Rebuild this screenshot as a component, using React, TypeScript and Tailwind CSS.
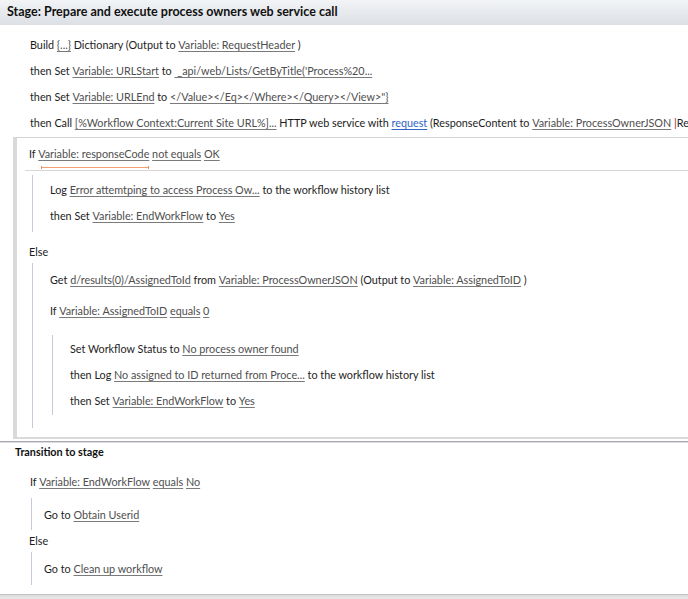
import React from 'react'

type Kids = { children: React.ReactNode; className?: string }

const L = ({ children, blue }: { children: React.ReactNode; blue?: boolean }) => (
  <span
    className={
      blue
        ? 'text-[#2f63c4] underline underline-offset-[2px] decoration-[#2f63c4]'
        : 'text-[#4e4e4e] underline underline-offset-[2px] decoration-[#7a7a7a]'
    }
  >
    {children}
  </span>
)

const Row = ({ children, className = '' }: Kids) => (
  <div className={`h-[26px] flex items-center whitespace-nowrap ${className}`}>{children}</div>
)

// vertical rule of a nested block
const Block = ({ children, className = '' }: Kids) => (
  <div className={`border-l border-[#c8c8da] ${className}`}>{children}</div>
)

const App = () => {
  return (
    <div className="w-[688px] h-[599px] overflow-hidden bg-white text-[10.8px] text-[#1c1c1c] font-['Lato',sans-serif]">
      {/* stage header */}
      <div className="h-[25px] flex items-center pl-[7px] bg-gradient-to-b from-[#f2f4f6] to-[#dce0e5] font-bold text-[12.5px] text-[#111] whitespace-nowrap">
        Stage: Prepare and execute process owners web service call
      </div>

      <div className="pt-[7px] pl-[30px]">
        <Row>
          Build&nbsp;<L>{'{...}'}</L>&nbsp;Dictionary (Output to&nbsp;<L>Variable: RequestHeader</L>&nbsp;)
        </Row>
        <Row>
          then Set&nbsp;<L>Variable: URLStart</L>&nbsp;to&nbsp;<L>&nbsp;_api/web/Lists/GetByTitle('Process%20...</L>
        </Row>
        <Row>
          then Set&nbsp;<L>Variable: URLEnd</L>&nbsp;to&nbsp;<L>{'</Value></Eq></Where></Query></View>"}'}</L>
        </Row>
        <Row className="overflow-hidden">
          then Call&nbsp;<L>[%Workflow Context:Current Site URL%]...</L>&nbsp;HTTP web service with&nbsp;
          <L blue>request</L>&nbsp;(ResponseContent to&nbsp;<L>Variable: ProcessOwnerJSON</L>&nbsp;
          <span className="text-[#8a1c1c]">|</span>Res
        </Row>
      </div>

      {/* If / Else box */}
      <div className="mt-[1px] ml-[13px] border-l-4 border-l-[#d9d9d9] border-t border-t-[#d4d4d4] border-b-2 border-b-[#dadada] pb-[9px]">
        <div className="pt-[3px] pl-[12px]">
          <Row>
            If&nbsp;
            <span className="relative">
              <L>Variable: responseCode</L>
              <span className="absolute left-[3px] right-0 bottom-[-7px] h-[3px] border-x border-[#f08a52] flex items-center">
                <span className="w-full h-px bg-[#f4a074]" />
              </span>
            </span>
            &nbsp;<L>not equals</L>&nbsp;<L>OK</L>
          </Row>
        </div>
        <div className="mt-[3px] ml-[8px] border-t border-[#d8d8d8]" />

        <Block className="mt-[4px] ml-[15px] pl-[17px] pt-[2px] pb-[3px]">
          <Row>
            Log&nbsp;<L>Error attemtping to access Process Ow...</L>&nbsp;to the workflow history list
          </Row>
          <Row>
            then Set&nbsp;<L>Variable: EndWorkFlow</L>&nbsp;to&nbsp;<L>Yes</L>
          </Row>
        </Block>

        <Row className="mt-[9px] !h-[22px] pl-[12px]">Else</Row>

        <Block className="ml-[15px] pt-[4px] pb-[13px]">
          <Row className="pl-[17px]">
            Get&nbsp;<L>d/results(0)/AssignedToId</L>&nbsp;from&nbsp;<L>Variable: ProcessOwnerJSON</L>&nbsp;(Output to&nbsp;
            <L>Variable: AssignedToID</L>&nbsp;)
          </Row>
          <Row className="mt-[5px] pl-[17px]">
            If&nbsp;<L>Variable: AssignedToID</L>&nbsp;<L>equals</L>&nbsp;<L>0</L>
          </Row>
          <Block className="mt-[11px] ml-[19px] pl-[17px] py-[1px]">
            <Row>
              Set Workflow Status to&nbsp;<L>No process owner found</L>
            </Row>
            <Row>
              then Log&nbsp;<L>No assigned to ID returned from Proce...</L>&nbsp;to the workflow history list
            </Row>
            <Row>
              then Set&nbsp;<L>Variable: EndWorkFlow</L>&nbsp;to&nbsp;<L>Yes</L>
            </Row>
          </Block>
        </Block>
      </div>

      <div className="h-[2px]" />
      <div className="h-px bg-[#a9a9a9]" />
      <div className="h-px bg-[#dcdce6]" />

      {/* transition */}
      <div className="pb-[9px] border-b border-[#c2c2c2]">
        <Row className="!h-[18px] pl-[15px] font-bold text-[#111]">Transition to stage</Row>
        <Row className="mt-[8px] pl-[30px]">
          If&nbsp;<L>Variable: EndWorkFlow</L>&nbsp;<L>equals</L>&nbsp;<L>No</L>
        </Row>
        <Block className="mt-[3px] ml-[31px] pl-[12px] pt-[4px] pb-[2px]">
          <Row>
            Go to&nbsp;<L>Obtain Userid</L>
          </Row>
        </Block>
        <Row className="!h-[22px] pl-[29px]">Else</Row>
        <Block className="ml-[31px] pl-[12px] pt-[4px] pb-[3px]">
          <Row>
            Go to&nbsp;<L>Clean up workflow</L>
          </Row>
        </Block>
      </div>
      <div className="h-[8px] bg-gradient-to-b from-[#dcdcdc] to-[#f5f5f5]" />
    </div>
  )
}

export default App
